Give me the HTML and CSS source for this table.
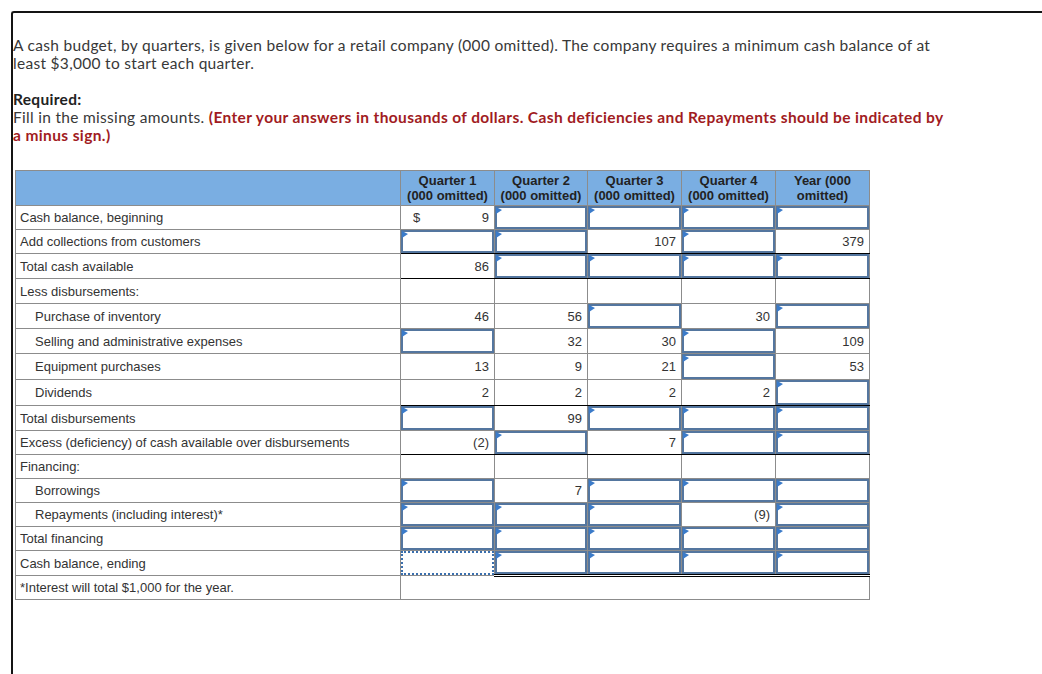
FILE: index.html
```html
<!DOCTYPE html>
<html>
<head>
<meta charset="utf-8">
<link rel="stylesheet" href="styles.css">
</head>
<body>
<div class="frame">
  <div class="intro">
    <p>A cash budget, by quarters, is given below for a retail company (000 omitted). The company requires a minimum cash balance of at<br>least $3,000 to start each quarter.</p>
    <p><b>Required:</b><br>Fill in the missing amounts. <span class="red">(Enter your answers in thousands of dollars. Cash deficiencies and Repayments should be indicated by<br>a minus sign.)</span></p>
  </div>
  <table class="budget">
    <colgroup>
      <col class="c-label"><col class="c-q"><col class="c-q2"><col class="c-q"><col class="c-q"><col class="c-q">
    </colgroup>
    <thead>
      <tr class="h35">
        <th></th>
        <th>Quarter 1<br>(000 omitted)</th>
        <th>Quarter 2<br>(000 omitted)</th>
        <th>Quarter 3<br>(000 omitted)</th>
        <th>Quarter 4<br>(000 omitted)</th>
        <th>Year (000<br>omitted)</th>
      </tr>
    </thead>
    <tbody>
      <tr class="h24">
        <td class="lbl">Cash balance, beginning</td>
        <td class="val dollar"><span class="cur">$</span><span>9</span></td>
        <td class="in"><div class="box"><i class="tri"></i></div></td>
        <td class="in"><div class="box"><i class="tri"></i></div></td>
        <td class="in"><div class="box"><i class="tri"></i></div></td>
        <td class="in"><div class="box"><i class="tri"></i></div></td>
      </tr>
      <tr class="h24 sum">
        <td class="lbl">Add collections from customers</td>
        <td class="in"><div class="box"><i class="tri"></i></div></td>
        <td class="in"><div class="box"><i class="tri"></i></div></td>
        <td class="val">107</td>
        <td class="in"><div class="box"><i class="tri"></i></div></td>
        <td class="val">379</td>
      </tr>
      <tr class="h25 sum">
        <td class="lbl">Total cash available</td>
        <td class="val">86</td>
        <td class="in"><div class="box"><i class="tri"></i></div></td>
        <td class="in"><div class="box"><i class="tri"></i></div></td>
        <td class="in"><div class="box"><i class="tri"></i></div></td>
        <td class="in"><div class="box"><i class="tri"></i></div></td>
      </tr>
      <tr class="h25">
        <td class="lbl">Less disbursements:</td>
        <td></td><td></td><td></td><td></td><td></td>
      </tr>
      <tr class="h25">
        <td class="lbl ind">Purchase of inventory</td>
        <td class="val">46</td>
        <td class="val">56</td>
        <td class="in"><div class="box"><i class="tri"></i></div></td>
        <td class="val">30</td>
        <td class="in"><div class="box"><i class="tri"></i></div></td>
      </tr>
      <tr class="h25">
        <td class="lbl ind">Selling and administrative expenses</td>
        <td class="in"><div class="box"><i class="tri"></i></div></td>
        <td class="val">32</td>
        <td class="val">30</td>
        <td class="in"><div class="box"><i class="tri"></i></div></td>
        <td class="val">109</td>
      </tr>
      <tr class="h26">
        <td class="lbl ind">Equipment purchases</td>
        <td class="val">13</td>
        <td class="val">9</td>
        <td class="val">21</td>
        <td class="in"><div class="box"><i class="tri"></i></div></td>
        <td class="val">53</td>
      </tr>
      <tr class="h26 sum">
        <td class="lbl ind">Dividends</td>
        <td class="val">2</td>
        <td class="val">2</td>
        <td class="val">2</td>
        <td class="val">2</td>
        <td class="in"><div class="box"><i class="tri"></i></div></td>
      </tr>
      <tr class="h25">
        <td class="lbl">Total disbursements</td>
        <td class="in"><div class="box"><i class="tri"></i></div></td>
        <td class="val">99</td>
        <td class="in"><div class="box"><i class="tri"></i></div></td>
        <td class="in"><div class="box"><i class="tri"></i></div></td>
        <td class="in"><div class="box"><i class="tri"></i></div></td>
      </tr>
      <tr class="h24 sum">
        <td class="lbl">Excess (deficiency) of cash available over disbursements</td>
        <td class="val">(2)</td>
        <td class="in"><div class="box"><i class="tri"></i></div></td>
        <td class="val">7</td>
        <td class="in"><div class="box"><i class="tri"></i></div></td>
        <td class="in"><div class="box"><i class="tri"></i></div></td>
      </tr>
      <tr class="h24">
        <td class="lbl">Financing:</td>
        <td></td><td></td><td></td><td></td><td></td>
      </tr>
      <tr class="h24">
        <td class="lbl ind">Borrowings</td>
        <td class="in"><div class="box"><i class="tri"></i></div></td>
        <td class="val">7</td>
        <td class="in"><div class="box"><i class="tri"></i></div></td>
        <td class="in"><div class="box"><i class="tri"></i></div></td>
        <td class="in"><div class="box"><i class="tri"></i></div></td>
      </tr>
      <tr class="h24">
        <td class="lbl ind">Repayments (including interest)*</td>
        <td class="in"><div class="box"><i class="tri"></i></div></td>
        <td class="in"><div class="box"><i class="tri"></i></div></td>
        <td class="in"><div class="box"><i class="tri"></i></div></td>
        <td class="val">(9)</td>
        <td class="in"><div class="box"><i class="tri"></i></div></td>
      </tr>
      <tr class="h24">
        <td class="lbl">Total financing</td>
        <td class="in"><div class="box"><i class="tri"></i></div></td>
        <td class="in"><div class="box"><i class="tri"></i></div></td>
        <td class="in"><div class="box"><i class="tri"></i></div></td>
        <td class="in"><div class="box"><i class="tri"></i></div></td>
        <td class="in"><div class="box"><i class="tri"></i></div></td>
      </tr>
      <tr class="h25 dbl">
        <td class="lbl">Cash balance, ending</td>
        <td class="in focus"><div class="box dotted"></div></td>
        <td class="in"><div class="box"><i class="tri"></i></div></td>
        <td class="in"><div class="box"><i class="tri"></i></div></td>
        <td class="in"><div class="box"><i class="tri"></i></div></td>
        <td class="in"><div class="box"><i class="tri"></i></div></td>
      </tr>
      <tr class="h24">
        <td class="lbl">*Interest will total $1,000 for the year.</td>
        <td colspan="5"></td>
      </tr>
    </tbody>
  </table>
</div>
</body>
</html>
```
FILE: styles.css
```css
html, body {
  margin: 0;
  padding: 0;
  background: #fff;
  overflow: hidden;
}

.frame {
  margin: 11px 0 0 11px;
  border-top: 2px solid #141414;
  border-left: 2px solid #141414;
  border-top-left-radius: 3px;
  box-sizing: border-box;
  height: calc(100vh - 11px);
}

.intro {
  padding-top: 23px;
  font-family: Lato, "Open Sans", sans-serif;
  font-size: 15.5px;
  letter-spacing: 0.3px;
  line-height: 18px;
  color: #383838;
  white-space: nowrap;
}

.intro p {
  margin: 0 0 18px 0;
}

.intro p:last-child {
  margin-bottom: 0;
}

.intro b {
  font-weight: 700;
  color: #222;
}

.red {
  color: #a11b22;
  font-weight: 700;
  letter-spacing: 0.38px;
}

.budget {
  margin: 26px 0 0 2px;
  border-collapse: collapse;
  table-layout: fixed;
  width: 855px;
  font-family: "Liberation Sans", Arial, sans-serif;
  font-size: 13px;
  color: #333;
}

.c-label { width: 385px; }
.c-q { width: 94px; }
.c-q2 { width: 93px; }

.budget th,
.budget td {
  border: 1px solid #8c8c8c;
  padding: 0;
}

.budget th {
  background: #7aaee2;
  font-weight: 700;
  color: #222;
  line-height: 15px;
  text-align: center;
  vertical-align: middle;
}

tr.h35 { height: 35px; }
tr.h24 { height: 24px; }
tr.h25 { height: 25px; }
tr.h26 { height: 26px; }

.lbl {
  padding-left: 4px !important;
  white-space: nowrap;
}

.lbl.ind {
  padding-left: 19px !important;
}

.val {
  text-align: right;
  padding-right: 5px !important;
}

.dollar span.cur {
  float: left;
  padding-left: 12px;
}

tr.sum td:not(.lbl) {
  border-bottom: 1px solid #000;
}

tr.dbl td:not(.lbl):not(.focus) {
  border-bottom: 3px double #000;
}

.in {
  height: 1px;
}

.box {
  position: relative;
  box-sizing: border-box;
  height: 100%;
  min-height: 23px;
  border: 2px solid #54769f;
}

.box.dotted {
  border: 2px dotted #3a6fae;
}

.tri {
  position: absolute;
  top: -1px;
  left: -1px;
  width: 0;
  height: 0;
  border-left: 6px solid #3b7bc9;
  border-top: 3px solid transparent;
  border-bottom: 4px solid transparent;
}
```
